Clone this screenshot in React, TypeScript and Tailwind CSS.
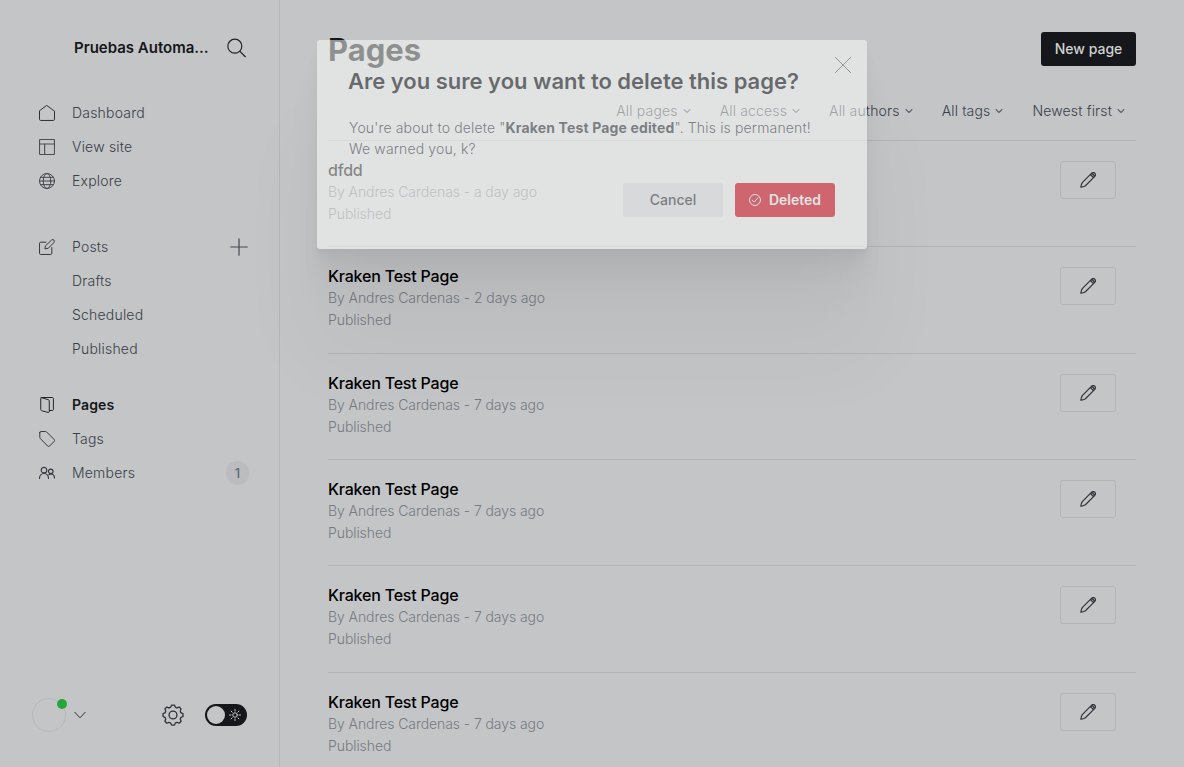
import React from "react";

type IconProps = { className?: string; children: React.ReactNode; w?: number };

const Icon = ({ className = "", children, w = 1.5 }: IconProps) => (
  <svg
    viewBox="0 0 24 24"
    fill="none"
    stroke="currentColor"
    strokeWidth={w}
    strokeLinecap="round"
    strokeLinejoin="round"
    className={`shrink-0 ${className}`}
  >
    {children}
  </svg>
);

const HomeIcon = () => (
  <Icon className="size-4 text-[#2d3239]">
    <path d="M.75 9.2v12.3c0 .9.7 1.7 1.7 1.7h19.1c1 0 1.7-.8 1.7-1.7V9.2L12 .9z" />
  </Icon>
);
const SiteIcon = () => (
  <Icon className="size-4 text-[#4a4f56]" w={1.7}>
    <rect x=".75" y=".75" width="22.5" height="22.5" rx="1.5" />
    <path d="M.75 7.5h22.5M8.5 7.5v15.75" />
  </Icon>
);
const GlobeIcon = () => (
  <Icon className="size-4 text-[#43484f]">
    <circle cx="12" cy="12" r="11.25" />
    <ellipse cx="12" cy="12" rx="5.6" ry="11.25" />
    <path d="M2.2 6.5h19.6M.75 12h22.5M2.2 17.5h19.6" />
  </Icon>
);
const PostsIcon = () => (
  <Icon className="size-4 text-[#33383e]">
    <path d="M13.4 14l-4.5.9.7-4.5L18.9 1.6a2.6 2.6 0 0 1 3.5 0 2.6 2.6 0 0 1 0 3.6z" />
    <path d="M19.2 12.8v8.9c0 .8-.7 1.5-1.5 1.5H2.3c-.8 0-1.5-.7-1.5-1.5V6.3c0-.8.7-1.5 1.5-1.5h8.2" />
  </Icon>
);
const PagesIcon = () => (
  <Icon className="size-4 text-[#22262b]">
    <path d="M3.2.9l11.1 3.2c.7.2 1.1.8 1.1 1.5v16.3c0 .9-.8 1.5-1.7 1.2L4 20.600c-.8-.3-1.4-.9-1.400-1.700V2.300C2.600 1.500 3.300.75 4.100.75h16c.8 0 1.5.7 1.5 1.500v16.500c0 .8-.7 1.500-1.500 1.500h-4.400" />
  </Icon>
);
const TagIcon = () => (
  <Icon className="size-4 text-[#33383e]">
    <path d="M1.200 2.200v7.200c0 .7.3 1.300.7 1.800l10.900 11.300c.8.900 2.100.9 3 .1l6.900-6.900c.9-.8.9-2.200 0-3L11.400 1.400C10.900.9 10.300.7 9.700.7H2.600c-.8 0-1.400.7-1.400 1.500z" />
  </Icon>
);
const MembersIcon = () => (
  <Icon className="size-4 text-[#33383e]" w={1.7}>
    <circle cx="7.500" cy="7.700" r="4.200" />
    <path d="M.75 20.300c0-4.400 3-7.600 6.750-7.600s6.750 3.200 6.750 7.600" />
    <circle cx="17.700" cy="9.500" r="3.400" />
    <path d="M14.600 14.800c3.900-3.200 8.700-.4 8.700 4.700" />
  </Icon>
);
const PencilIcon = () => (
  <Icon className="size-4 text-[#30343a]" w={1.8}>
    <path d="M22.200 1.800a3.300 3.300 0 0 0-4.700 0L3.400 15.900C2.400 17.500 1.500 20 1.200 22.800c2.800-.3 5.300-1.200 6.900-2.200L22.200 6.500a3.300 3.300 0 0 0 0-4.700zM15.500 3.800l4.700 4.700M16.800 2.500c2.500.3 4.400 2.200 4.700 4.700" />
  </Icon>
);
const GearIcon = () => (
  <Icon className="size-[22px] text-[#2e3339]" w={1.45}>
    <path d="M9.800 2.700 10.500 1.200h3l.7 1.500c.5 1.200 1.900 1.700 3 1.200l1.600-.6 2 2-.6 1.600c-.5 1.100 0 2.500 1.200 3l1.500.7v3l-1.500.7c-1.200.5-1.700 1.900-1.200 3l.6 1.600-2 2-1.600-.6c-1.100-.5-2.500 0-3 1.200l-.7 1.500h-3l-.7-1.500c-.5-1.200-1.900-1.700-3-1.200l-1.600.6-2-2 .6-1.600c.5-1.100 0-2.500-1.200-3l-1.500-.7v-3l1.500-.7c1.200-.5 1.700-1.900 1.200-3l-.6-1.600 2-2 1.600.6c1.100.5 2.500 0 3-1.200z" />
    <circle cx="12" cy="12" r="4.300" />
  </Icon>
);
const SunIcon = () => (
  <Icon className="size-3 text-[#c4c5c7]" w={2}>
    <circle cx="12" cy="12" r="4.500" />
    <path d="M12 1v3M12 20v3M1 12h3M20 12h3M4.200 4.200l2.100 2.100M17.700 17.700l2.100 2.100M4.200 19.800l2.100-2.100M17.700 6.300l2.100-2.100" />
  </Icon>
);

const NavItem = ({
  icon,
  label,
  active,
  children,
}: {
  icon?: React.ReactNode;
  label: string;
  active?: boolean;
  children?: React.ReactNode;
}) => (
  <li className="flex h-[34px] items-center pl-[39px] pr-[31px]">
    <span className="flex w-[33px] shrink-0">{icon}</span>
    <span
      className={
        active
          ? "flex-1 font-semibold tracking-[0.1px] text-[#15171a]"
          : "flex-1 text-[#394047]"
      }
    >
      {label}
    </span>
    {children}
  </li>
);

const filters = ["All pages", "All access", "All authors", "All tags", "Newest first"];

const pages = [
  { title: "dfdd", age: "a day ago" },
  { title: "Kraken Test Page", age: "2 days ago" },
  { title: "Kraken Test Page", age: "7 days ago" },
  { title: "Kraken Test Page", age: "7 days ago" },
  { title: "Kraken Test Page", age: "7 days ago" },
  { title: "Kraken Test Page", age: "7 days ago" },
];

const Sidebar = () => (
  <nav className="flex w-[280px] shrink-0 flex-col border-r border-[#b4b6b8] tracking-[0.2px]">
    <div className="flex h-[96px] items-center pl-[74px] pr-[32px]">
      <span className="w-[137px] truncate text-[15px] font-semibold tracking-[0px] text-[#15171a]">
        Pruebas Automatizadas
      </span>
      <Icon className="ml-[15px] size-5 text-[#1d2024]" w={1.4}>
        <circle cx="10.600" cy="9.800" r="8.400" />
        <path d="M16.700 16l6.500 6.500" />
      </Icon>
    </div>
    <ul>
      <NavItem icon={<HomeIcon />} label="Dashboard" />
      <NavItem icon={<SiteIcon />} label="View site" />
      <NavItem icon={<GlobeIcon />} label="Explore" />
    </ul>
    <ul className="mt-8">
      <NavItem icon={<PostsIcon />} label="Posts">
        <Icon className="size-[18px] text-[#43484e]" w={1.6}>
          <path d="M12 1v22M1 12h22" />
        </Icon>
      </NavItem>
      <NavItem label="Drafts" />
      <NavItem label="Scheduled" />
      <NavItem label="Published" />
    </ul>
    <ul className="mt-[22px]">
      <NavItem icon={<PagesIcon />} label="Pages" active />
      <NavItem icon={<TagIcon />} label="Tags" />
      <NavItem icon={<MembersIcon />} label="Members">
        <span className="-mr-px flex h-6 w-[23px] items-center justify-center rounded-full bg-[#babcbe] text-[13px] font-medium text-[#5c6b78]">
          1
        </span>
      </NavItem>
    </ul>
    <div className="mt-auto mb-[35px] flex h-[34px] items-center pl-8">
      <span className="relative size-[34px] rounded-full border border-[#b6b8ba]">
        <span className="absolute top-0 right-[-2px] size-[10px] rounded-full bg-[#25a63a]" />
      </span>
      <Icon className="ml-2 size-3 text-[#2e3339]" w={2}>
        <path d="M1.500 6.500L12 17.500 22.500 6.500" />
      </Icon>
      <span className="ml-[76px] flex">
        <GearIcon />
      </span>
      <span className="ml-[21px] flex h-[22px] w-[42px] items-center rounded-full bg-[#15171a] pl-[2px]">
        <span className="size-[18px] rounded-full bg-[#c4c5c7]" />
        <span className="ml-1 flex">
          <SunIcon />
        </span>
      </span>
    </div>
  </nav>
);

const DeleteDialog = () => (
  <div className="absolute left-[317px] top-[40px] flex h-[209px] w-[550px] flex-col rounded-[3px] bg-[#fdfffd] px-8 pt-[27px] opacity-[0.52] shadow-[0_2.8px_2.2px_rgba(0,0,0,0.02),0_6.7px_5.3px_rgba(0,0,0,0.028),0_12.5px_10px_rgba(0,0,0,0.035),0_22.3px_17.9px_rgba(0,0,0,0.042),0_41.8px_33.4px_rgba(0,0,0,0.05),0_100px_80px_rgba(0,0,0,0.07)]">
    <h2 className="-ml-px text-[22px] font-[580] leading-7 tracking-[0px] text-[#15171a]">
      Are you sure you want to delete this page?
    </h2>
    <p className="mt-[22px] leading-[21px] tracking-[0.15px] text-[#394047]">
      You're about to delete "<strong className="font-bold">Kraken Test Page edited</strong>". This is
      permanent!
      <br />
      We warned you, k?
    </p>
    <div className="mt-[24px] flex justify-end gap-3">
      <button className="h-[34px] w-[100px] rounded-[3px] bg-[#ebecef] font-[450] text-[#394047]">
        Cancel
      </button>
      <button className="flex h-[34px] w-[100px] items-center justify-center gap-2 rounded-[3px] bg-[#d80f20] font-semibold text-white">
        <Icon className="size-3" w={2}>
          <circle cx="12" cy="12" r="11" />
          <path d="M6.500 12.500l3.700 3.700 7.300-8.200" />
        </Icon>
        Deleted
      </button>
    </div>
    <svg
      viewBox="0 0 16 16"
      className="absolute right-4 top-[17px] size-4 text-[#626d79]"
      fill="none"
      stroke="currentColor"
      strokeWidth="1"
    >
      <path d="M0 0l16 16M16 0L0 16" />
    </svg>
  </div>
);

export default function App() {
  return (
    <div className="relative flex h-[767px] w-[1184px] overflow-hidden bg-[#c4c5c7] font-['Inter',sans-serif] text-[14px] font-[360] leading-[22px]">
      <Sidebar />
      <main className="flex min-w-0 flex-1 flex-col px-12">
        <header className="flex h-[98px] items-center justify-between">
          <h1 className="pt-px text-[31px] font-bold leading-9 text-[#15171a]">Pages</h1>
          <button className="h-[34px] w-[95px] rounded-[3px] bg-[#15171a] font-medium text-[#d0d1d3]">
            New page
          </button>
        </header>
        <div className="flex h-[26px] shrink-0 items-center justify-end gap-[29px] pr-[11px] tracking-[0.16px] text-[#394047]">
          {filters.map((f) => (
            <span key={f} className="flex items-center gap-[5px]">
              {f}
              <Icon className="size-2 text-[#5c6268]" w={3.2}>
                <path d="M3 7.500l9 9 9-9" />
              </Icon>
            </span>
          ))}
        </div>
        <ol className="mt-4 h-[627px] shrink-0">
          {pages.map((p, i) => (
            <li
              key={i}
              className="flex h-[106.35px] justify-between border-t border-[#b2b4b6] pr-5 pt-5"
            >
              <div className="-mt-0.5 tracking-[-0.08px] text-[#767b83]">
                <h3 className="text-[16px] font-medium tracking-[-0.2px] text-black">{p.title}</h3>
                <p>By Andres Cardenas - {p.age}</p>
                <p>Published</p>
              </div>
              <span className="flex h-[38px] w-14 items-center justify-center rounded-[3px] border border-[#b2b4b6]">
                <PencilIcon />
              </span>
            </li>
          ))}
        </ol>
      </main>
      <DeleteDialog />
    </div>
  );
}
